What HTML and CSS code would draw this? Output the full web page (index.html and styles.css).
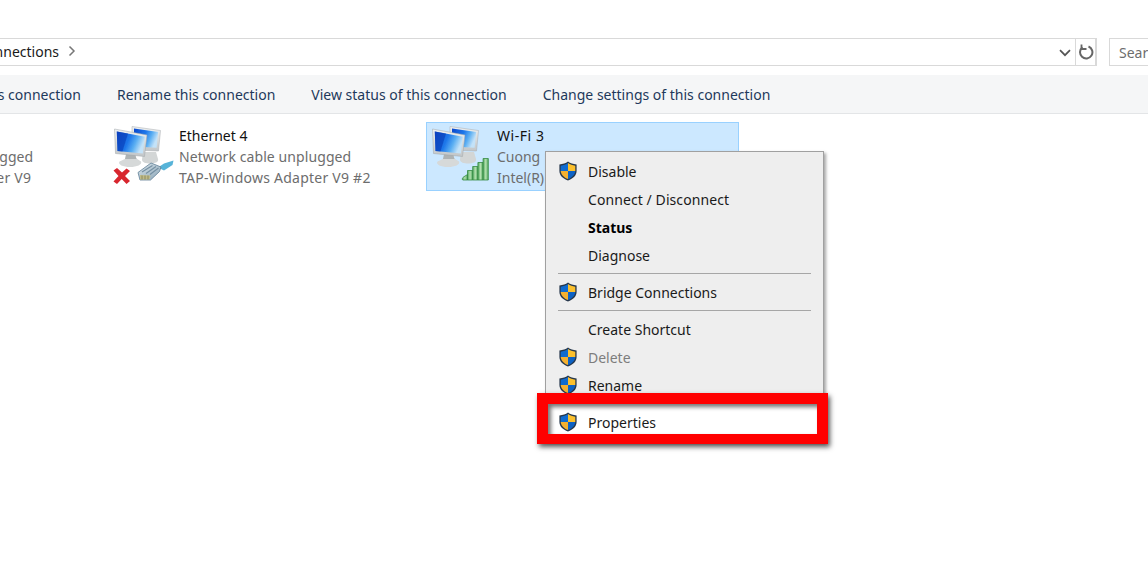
FILE: index.html
```html
<!DOCTYPE html>
<html lang="en">
<head>
<meta charset="utf-8">
<title>Network Connections</title>
<link rel="stylesheet" href="styles.css">
</head>
<body>
<svg class="defs" width="0" height="0" aria-hidden="true">
  <defs>
    <linearGradient id="screen" x1="0" y1="0" x2="1" y2=".35">
      <stop offset="0" stop-color="#0a47cc"/>
      <stop offset=".5" stop-color="#1f78ea"/>
      <stop offset=".75" stop-color="#5aaef2"/>
      <stop offset="1" stop-color="#c3e2f8"/>
    </linearGradient>
    <linearGradient id="bezel" x1="0" y1="0" x2="0" y2="1">
      <stop offset="0" stop-color="#eef1f2"/>
      <stop offset="1" stop-color="#c2c6c8"/>
    </linearGradient>
    <linearGradient id="bar" x1="0" y1="0" x2="1" y2="0">
      <stop offset="0" stop-color="#4fa75c"/>
      <stop offset=".5" stop-color="#b4e0b0"/>
      <stop offset="1" stop-color="#4fa75c"/>
    </linearGradient>
    <linearGradient id="plug" x1="0" y1="0" x2="1" y2="1">
      <stop offset="0" stop-color="#dbe6ec"/>
      <stop offset="1" stop-color="#8aa5b7"/>
    </linearGradient>
    <filter id="soft" x="-5%" y="-5%" width="110%" height="110%">
      <feGaussianBlur stdDeviation=".35"/>
    </filter>
    <symbol id="shield" viewBox="0 0 20 20">
      <path d="M10 .6c2.400 1.800 5 2.700 8.600 2.900v6.600c0 4.400-3.500 7.600-8.600 9.400-5.100-1.800-8.600-5-8.600-9.400V3.500C5 3.300 7.600 2.400 10 .6z" fill="#27384c"/>
      <path d="M10 2v8H2.700V4.700C5.600 4.400 7.900 3.500 10 2z" fill="#0f6bd0"/>
      <path d="M10 2c2.100 1.500 4.400 2.400 7.300 2.700V10H10z" fill="#fbc02d"/>
      <path d="M2.700 10H10v8.100c-4.200-1.600-7-4.400-7.300-8.100z" fill="#f4b030"/>
      <path d="M10 10h7.300c-.3 3.700-3.100 6.500-7.300 8.100z" fill="#0d62c4"/>
    </symbol>
    <symbol id="computers" viewBox="0 0 64 64">
      <g filter="url(#soft)">
        <path d="M31 27h13l2 7c1 3-3 4.500-8 4.500-4 0-8-1-8-4z" fill="#d3d6d6"/>
        <path d="M20 1.500 48.500 5.500 46.500 26 20 25z" fill="url(#bezel)" stroke="#a6abae" stroke-width=".5"/>
        <path d="M22 3.600 46.200 7 44.600 22.800 22 21.600z" fill="url(#screen)"/>
        <path d="M7.500 36.500 14 33.500V29h9l1.500 4.500 4.500 3c1.500 3-4 5.500-11 5.500-7 0-12.500-2.500-10.500-5.500z" fill="#d6d9d9"/>
        <path d="M14 29h9l1.500 5H13z" fill="#aeb3b4"/>
        <path d="M2.500 4 35 10 32.500 31.500 3.500 28.500z" fill="url(#bezel)" stroke="#9fa5a8" stroke-width=".5"/>
        <path d="M4.800 6.500 32.900 11.700 30.800 28.500 5.500 25.900z" fill="url(#screen)"/>
        <path d="M4.800 6.500 16 8.600 10.500 26.400 5.500 25.900z" fill="#093cb5" opacity=".6"/>
      </g>
    </symbol>
  </defs>
</svg>

<header class="address-row">
  <div class="address-bar">
    <div class="crumb"><span>Network Connections</span></div>
    <svg class="crumb-sep" width="8" height="12" viewBox="0 0 8 12"><path d="M1.500 1.500 6 6l-4.500 4.500" fill="none" stroke="#777" stroke-width="1.500"/></svg>
    <svg class="drop" width="12" height="8" viewBox="0 0 12 8"><path d="M1 1.200 6 6.200l5-5" fill="none" stroke="#555" stroke-width="1.700"/></svg>
    <div class="refresh">
      <svg width="16" height="16" viewBox="0 0 16 16"><path d="M4.500 3.300A6.200 6.200 0 1 0 10.500 2.500" fill="none" stroke="#666" stroke-width="2"/><path d="M3.500 .5v4.500H8.500" fill="none" stroke="#666" stroke-width="1.800"/></svg>
    </div>
  </div>
  <div class="search">Search</div>
</header>

<nav class="toolbar">
  <div class="tool tool-cut"><span>Disable this connection</span></div>
  <div class="tool">Rename this connection</div>
  <div class="tool">View status of this connection</div>
  <div class="tool">Change settings of this connection</div>
</nav>

<main class="connections">
  <article class="conn">
    <svg class="conn-icon" width="64" height="64"><use href="#computers"/></svg>
    <div class="conn-text">
      <div class="conn-name">Ethernet 3</div>
      <div class="conn-status">Network cable unplugged</div>
      <div class="conn-adapter">TAP-Windows Adapter V9</div>
    </div>
  </article>
  <article class="conn">
    <svg class="conn-icon" width="64" height="64" viewBox="0 0 64 64">
      <use href="#computers" width="64" height="64"/>
      <path d="M1.500 45.500 5 43l5 4.500L14.500 43.500 18 46l-5 5 5 5-3.500 3-4.800-5-4.700 5L1.500 56.500l5-5.500z" fill="#d8252f" filter="url(#soft)"/>
      <g filter="url(#soft)">
        <path d="M46 42.500 52 38.500 61.500 35.500 60.500 40 52 45.500z" fill="#57b3d8"/>
        <path d="M26 47.500 39 38 49 42 47.500 46.500 38.500 55 28 55z" fill="url(#plug)" stroke="#5f7f95" stroke-width=".8"/>
        <path d="M30 47 40.500 40.500M34 48.500 44 41.500M38 49.500 46.500 43" stroke="#7590a3" stroke-width="1.200"/>
        <path d="M28 50 38.500 50.500 37.500 54.500H28z" fill="#c0bb88"/>
        <path d="M30 50.500v4M33 50.500v4M36 50.500v4" stroke="#7f7f55" stroke-width=".8"/>
      </g>
    </svg>
    <div class="conn-text">
      <div class="conn-name">Ethernet 4</div>
      <div class="conn-status">Network cable unplugged</div>
      <div class="conn-adapter">TAP-Windows Adapter V9 #2</div>
    </div>
  </article>
  <article class="conn conn-selected">
    <svg class="conn-icon" width="64" height="64" viewBox="0 0 64 64">
      <use href="#computers" width="64" height="64"/>
      <g fill="url(#bar)" stroke="#358a43" stroke-width=".8">
        <path d="M33 55c-1 0-1-2 .5-3l4-2.500V55z"/>
        <path d="M37.500 45.500h5.200V55h-5.200z"/>
        <path d="M42.700 41.500h5.200V55h-5.200z"/>
        <path d="M47.900 37.500h5.200V55h-5.200z"/>
        <path d="M53.100 33.500h5.200V55h-5.200z"/>
      </g>
    </svg>
    <div class="conn-text">
      <div class="conn-name conn-name-wide">Wi-Fi 3</div>
      <div>Cuong</div>
      <div>Intel(R)</div>
    </div>
  </article>
</main>

<div class="menu">
  <div class="item"><svg class="shield"><use href="#shield"/></svg>Disable</div>
  <div class="item item-wide">Connect / Disconnect</div>
  <div class="item item-bold">Status</div>
  <div class="item">Diagnose</div>
  <div class="sep"></div>
  <div class="item"><svg class="shield"><use href="#shield"/></svg>Bridge Connections</div>
  <div class="sep"></div>
  <div class="item">Create Shortcut</div>
  <div class="item item-off"><svg class="shield"><use href="#shield"/></svg>Delete</div>
  <div class="item"><svg class="shield"><use href="#shield"/></svg>Rename</div>
</div>

<div class="highlight">
  <div class="item item-hl"><svg class="shield"><use href="#shield"/></svg>Properties</div>
</div>
</body>
</html>
```

FILE: styles.css
```css
* { box-sizing: border-box; }

html, body {
  margin: 0;
  height: 574px;
  overflow: hidden;
  background: #fff;
}

body {
  font-family: "Noto Sans", "Open Sans", sans-serif;
  font-size: 14px;
  color: #1a1a1a;
}

.defs { position: absolute; }

.address-row {
  display: flex;
  gap: 12px;
  height: 28px;
  margin-top: 38px;
}

.address-bar {
  width: 1097px;
  display: flex;
  align-items: center;
  border: 1px solid #d9d9d9;
  border-left: 0;
}

.crumb {
  width: 59px;
  display: flex;
  justify-content: flex-end;
  white-space: nowrap;
  margin-top: -2px;
}

.crumb-sep { margin-left: 9px; margin-top: -2px; }

.drop { margin-left: auto; margin-right: 4px; margin-top: 2px; }

.refresh {
  width: 21px;
  height: 100%;
  display: flex;
  align-items: center;
  justify-content: center;
  border-left: 1px solid #d9d9d9;
  border-right: 1px solid #d9d9d9;
}

.search {
  flex: 1;
  padding-left: 9px;
  line-height: 28px;
  border: 1px solid #d9d9d9;
  border-right: 0;
  color: #6d6d6d;
  overflow: hidden;
}

.toolbar {
  display: flex;
  gap: 36px;
  align-items: center;
  height: 39px;
  margin-top: 9px;
  background: #f5f6f7;
  border-bottom: 1px solid #e3e5e7;
  color: #1e395b;
  white-space: nowrap;
}

.tool-cut {
  width: 81px;
  display: flex;
  justify-content: flex-end;
}

.connections {
  display: flex;
  gap: 5px;
  margin-left: -210px;
  padding-top: 8px;
}

.conn {
  flex: 0 0 313px;
  height: 69px;
  display: flex;
  border: 1px solid transparent;
  padding-left: 3px;
  white-space: nowrap;
}

.conn-selected {
  background: #cce8ff;
  border-color: #99d1ff;
}

.conn-icon { flex: none; margin-top: 2px; }

.conn-text {
  padding-left: 3px;
  padding-top: 2px;
  line-height: 21px;
  color: #6d6d6d;
}

.conn-name { color: #111; }
.conn-name-wide { letter-spacing: .55px; }
.conn-status { letter-spacing: .09px; }
.conn-adapter { letter-spacing: .24px; }

.menu {
  position: absolute;
  left: 545px;
  top: 151px;
  width: 279px;
  height: 290px;
  padding: 5px 0;
  background: #eee;
  border: 1px solid #a0a0a0;
  box-shadow: 2px 2px 3px rgba(0, 0, 0, .35);
}

.item {
  position: relative;
  height: 28px;
  padding-left: 42px;
  line-height: 30px;
  color: #1a1a1a;
  white-space: nowrap;
}

.item-bold { font-weight: 700; color: #000; }
.item-off { color: #7d7d7d; }
.item-wide { letter-spacing: .08px; }

.sep {
  height: 9px;
  margin: 0 12px;
  background: linear-gradient(#a6a6a6, #a6a6a6) center / 100% 1px no-repeat;
}

.shield {
  position: absolute;
  left: 12px;
  top: 4px;
  width: 20px;
  height: 20px;
}

.highlight {
  position: absolute;
  left: 537px;
  top: 393px;
  width: 291px;
  height: 51px;
  border: 11px solid #f00;
  border-bottom-width: 10px;
  background: #fff;
  box-shadow: 2px 3px 5px rgba(0, 0, 0, .65), inset 3px 3px 4px rgba(0, 0, 0, .55);
}

.item-hl { padding-left: 40px; top: 4px; }
.item-hl .shield { left: 10px; }
```
